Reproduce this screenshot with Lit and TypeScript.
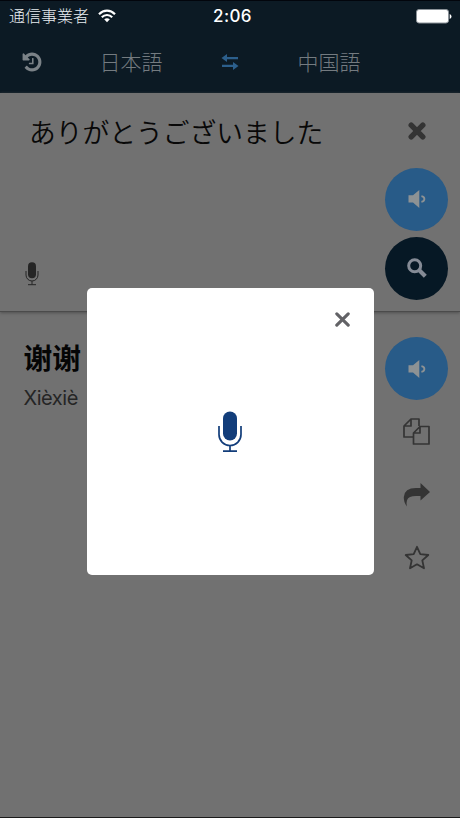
import { LitElement, html, svg, css } from "lit";
import { customElement } from "lit/decorators.js";

const micIcon = svg`
  <rect x="6" y="0.5" width="14" height="29" rx="7" fill="currentColor"/>
  <path d="M2 15v8.500a11 11 0 0 0 22 0V15M13 34.500v5.500M6 40.200h14" fill="none" stroke="currentColor" stroke-width="1.700"/>`;

const speakerIcon = html`<svg width="20" height="20" viewBox="0 0 20 20" fill="currentColor">
  <path d="M1.500 6.300h4.500L12.300 1v18L6 13.500H1.500z"/>
  <path d="M14.400 7.200q3 .6 3 2.800t-3 2.800" fill="none" stroke="currentColor" stroke-width="1.800"/>
</svg>`;

@customElement("app-root")
export class AppRoot extends LitElement {
  static styles = css`
    :host {
      display: block;
      position: relative;
      width: 460px;
      height: 818px;
      overflow: hidden;
      box-sizing: border-box;
      background: #717171;
      border-bottom: 1px solid #1b1b1b;
      font-family: "Liberation Sans", "Noto Sans CJK JP", sans-serif;
    }
    svg { display: block; flex: none; }
    .top { height: 93px; background: #0c1a24; border-top: 1px solid #02050c; box-sizing: border-box; }
    .status {
      display: grid;
      grid-template-columns: 1fr auto 1fr;
      align-items: center;
      height: 30px;
      padding: 0 8px 0 9px;
      color: #fff;
    }
    .carrier { display: flex; align-items: center; gap: 9px; font: 300 16px/30px "Noto Sans CJK JP", sans-serif; color: #e8edf0; }
    .carrier span { margin-top: -2px; }
    .carrier svg { margin-top: -1px; }
    .clock { font: 500 17px/30px Inter, sans-serif; letter-spacing: 0.400px; padding-left: 4px; }
    .battery { justify-self: end; }
    .nav {
      display: grid;
      grid-template-columns: 64px 134px 64px 134px 64px;
      align-items: center;
      justify-items: center;
      height: 60px;
      color: #7b8287;
    }
    .history { margin-top: 2px; }
    .lang { font: 300 21px/30px "Noto Sans CJK JP", sans-serif; color: #747b80; }
    .swap { color: #2c5f8c; margin-top: 1px; }
    .source {
      display: flex;
      justify-content: space-between;
      height: 218px;
      border-bottom: 1px solid #4b4b4b;
      box-shadow: 0 1px 3px #505050;
    }
    .entry { display: flex; flex-direction: column; justify-content: space-between; padding: 19px 0 25px 25px; }
    .phrase { font: 350 26.750px/40px "Noto Sans CJK JP", sans-serif; color: #080808; padding-left: 4px; white-space: nowrap; }
    .small-mic { color: #252525; }
    .rail { display: flex; flex-direction: column; align-items: center; width: 63px; margin-right: 12px; color: #343434; }
    .clear { margin: 29px 0 27.500px; }
    .round { display: flex; align-items: center; justify-content: center; width: 63px; height: 63px; border-radius: 50%; background: #285b88; color: #8d9294; }
    .search { background: #061825; margin-top: 6px; color: #858b96; }
    .result { display: flex; justify-content: space-between; padding-top: 25px; }
    .answer { padding-left: 23.500px; }
    .word { font: 700 28.800px/40px "Noto Sans CJK SC", sans-serif; color: #050505; }
    .pinyin { font: 400 20px/30px Inter, sans-serif; letter-spacing: -0.450px; color: #252525; margin-top: 6px; }
    .copy { margin-top: 18px; }
    .share { margin-top: 38px; }
    .star { margin-top: 38px; }
    .dialog {
      position: absolute;
      left: 86.500px;
      top: 288px;
      width: 287px;
      height: 287px;
      border-radius: 5px;
      background: #fff;
      display: flex;
      align-items: center;
      justify-content: center;
      color: #123d7a;
    }
    .dismiss { position: absolute; right: 24px; top: 24px; color: #626266; }
  `;

  render() {
    return html`
      <header class="top">
        <div class="status">
          <div class="carrier">
            <span>通信事業者</span>
            <svg width="18" height="14" viewBox="0 0 18 14" fill="none" stroke="#fff" stroke-width="2.200">
              <path d="M1 5.200Q4.500 1.600 9 1.600T17 5.200M3.800 8.200Q6 6 9 6T14.200 8.200"/>
              <path d="M6.200 10.300Q9 8 11.800 10.300L9 13.300z" fill="#fff" stroke="none"/>
            </svg>
          </div>
          <div class="clock">2:06</div>
          <svg class="battery" width="36" height="15" viewBox="0 0 36 15">
            <rect x=".5" y=".5" width="32" height="13.500" rx="2.500" fill="#fff" stroke="#8b9298"/>
            <path d="M33.700 5q1.800.6 1.800 2.500t-1.800 2.500z" fill="#fff"/>
          </svg>
        </div>
        <nav class="nav">
          <svg class="history" width="22" height="22" viewBox="0 0 1792 1792" fill="currentColor">
            <path d="M1664 896q0 156-61 298t-164 245-245 164-298 61q-172 0-327-72.500t-264-204.500q-7-10-6.500-22.500t8.500-20.500l137-138q10-9 25-9 16 2 23 12 73 95 179 147t225 52q104 0 198.500-40.500t163.500-109.500 109.500-163.500 40.500-198.500-40.500-198.500-109.500-163.500-163.500-109.500-198.500-40.500q-98 0-188 35.500t-160 101.500l137 138q31 30 14 69-17 40-59 40h-448q-26 0-45-19t-19-45v-448q0-42 40-59 39-17 69 14l130 129q107-101 244.500-156.500t284.500-55.500q156 0 298 61t245 164 164 245 61 298zm-640-288v448q0 14-9 23t-23 9h-320q-14 0-23-9t-9-23v-64q0-14 9-23t23-9h224v-352q0-14 9-23t23-9h64q14 0 23 9t9 23z"/>
          </svg>
          <span class="lang">日本語</span>
          <svg class="swap" width="18" height="16" viewBox="0 0 18 16" fill="currentColor">
            <path d="M.5 4 6 0v2.900h11v2.300H6V8zM17.500 12 12 8v2.800H1v2.300h11V16z"/>
          </svg>
          <span class="lang">中国語</span>
        </nav>
      </header>
      <section class="source">
        <div class="entry">
          <div class="phrase">ありがとうございました</div>
          <svg class="small-mic" width="14" height="24" viewBox="0 0 14 24">
            <rect x="3" y=".3" width="8" height="16" rx="4" fill="currentColor"/>
            <path d="M1 9v4a6 6 0 0 0 12 0V9M7 19v3.500M3 22.700h8" fill="none" stroke="currentColor"/>
          </svg>
        </div>
        <div class="rail">
          <svg class="clear" width="18" height="18" viewBox="0 0 18 18" fill="none" stroke="currentColor" stroke-width="5.400" stroke-linecap="round">
            <path d="m3.200 3.200 11.600 11.600M14.800 3.200 3.200 14.800"/>
          </svg>
          <div class="round">${speakerIcon}</div>
          <div class="round search">
            <svg width="20" height="20" viewBox="0 0 20 20" fill="none" stroke="currentColor">
              <circle cx="7.700" cy="7.700" r="6" stroke-width="3"/>
              <path d="m12.300 12.300 6 6" stroke-width="4.200"/>
            </svg>
          </div>
        </div>
      </section>
      <section class="result">
        <div class="answer">
          <div class="word" lang="zh">谢谢</div>
          <div class="pinyin">Xièxiè</div>
        </div>
        <div class="rail">
          <div class="round">${speakerIcon}</div>
          <svg class="copy" width="27" height="27" viewBox="0 0 27 27" fill="none" stroke="currentColor" stroke-width="1.700" stroke-linejoin="round">
            <path d="M10 19H1V8l7-7h8v7M8 1v7H1"/>
            <path d="M17 8.500h9V26H10.500V15zM17 8.500V15h-6.500"/>
          </svg>
          <svg class="share" width="27" height="24" viewBox="0 0 27 24" fill="currentColor">
            <path d="M17.500 0 27 9l-9.500 8.500V13H13q-7.500 0-9 4.200-.8 2.300-.2 6.300Q.5 18.500.8 14 1.500 5 13 5h4.500z"/>
          </svg>
          <svg class="star" width="26" height="25" viewBox="0 0 26 25" fill="none" stroke="currentColor" stroke-width="1.800" stroke-linejoin="round">
            <path d="m13 1.800 3.300 7.300 8 .9-6 5.400 1.700 7.900-7-4-7 4 1.700-7.900-6-5.400 8-.9z"/>
          </svg>
        </div>
      </section>
      <div class="dialog" role="dialog">
        <svg width="26" height="41" viewBox="0 0 26 41">${micIcon}</svg>
        <svg class="dismiss" width="15" height="15" viewBox="0 0 15 15" stroke="currentColor" stroke-width="3.100" stroke-linecap="round">
          <path d="m1.800 1.800 11.400 11.400M13.200 1.800 1.800 13.200"/>
        </svg>
      </div>
    `;
  }
}
